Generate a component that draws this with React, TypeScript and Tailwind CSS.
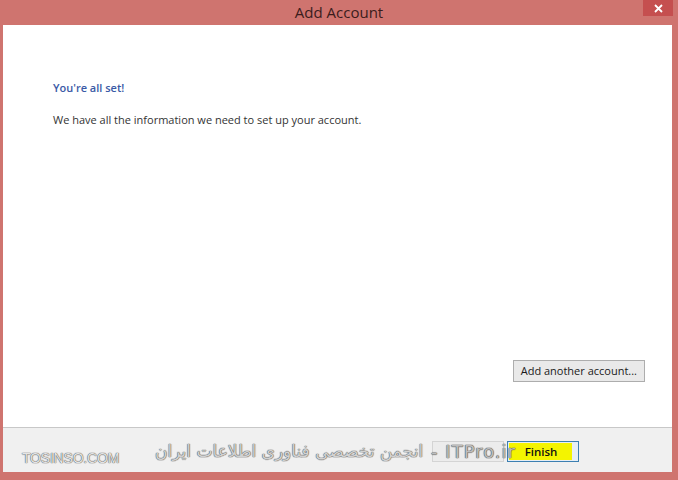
import React from "react";

export default function App() {
  return (
    <div className="w-[678px] h-[480px] bg-[#cf746f] flex flex-col overflow-hidden font-['Open_Sans','Noto_Sans',sans-serif]">
      {/* Title bar */}
      <div className="relative h-[25px] flex items-center justify-center shrink-0">
        <span className="text-[15px] text-[#3b1c1c] leading-none">Add Account</span>
        <div className="absolute right-[5px] top-0 w-[30px] h-[16px] bg-[#c54f4f] flex items-center justify-center">
          <svg width="9" height="9" viewBox="0 0 9 9">
            <path d="M1 1 L8 8 M8 1 L1 8" stroke="#fff" strokeWidth="1.8" />
          </svg>
        </div>
      </div>

      {/* Window body */}
      <div className="flex-1 ml-[3px] mr-[6px] mb-[8px] flex flex-col bg-white">
        <div className="flex-1 flex flex-col pl-[50px] pr-[27px] pt-[55px] border-b border-[#c8c8c8]">
          <div className="text-[11px] font-semibold text-[#3a5aa6] leading-[16px]">You're all set!</div>
          <div className="text-[11px] text-[#333] leading-[16px] mt-[16px]">We have all the information we need to set up your account.</div>
          <div className="flex-1" />
          <div className="flex justify-end mb-[45px]">
            <div className="h-[22px] px-[7px] border border-[#adadad] bg-[#e9e9e9] flex items-center text-[11px] text-[#1a1a1a]">
              Add another account...
            </div>
          </div>
        </div>
        <div className="relative h-[44px] bg-[#f0f0f0] shrink-0 flex items-start pt-[13px] pl-[429px]">
          <div className="w-[72px] h-[21px] border border-[#d4d4d4] bg-[#ececec]" />
          <div className="ml-[3px] w-[72px] h-[21px] border border-[#3c7fb1] bg-[#e6eef6] relative flex items-center justify-center">
            <div className="absolute left-[1px] top-[1px] bottom-[1px] right-[6px] bg-[#f4f400]" />
            <span className="relative text-[11.5px] font-semibold text-[#111] mr-[4px]">Finish</span>
          </div>

          {/* Watermark */}
          <div className="absolute left-[19px] top-[20px] flex items-baseline">
            <span className="text-[14px] text-[#e4e4e4] tracking-[-0.2px] font-['Liberation_Sans',Arial,sans-serif] [text-shadow:0_0_1px_#4a4a4a,0_0_1px_#4a4a4a]">
              TOSINSO.COM
            </span>
          </div>
          <div className="absolute left-[152px] top-[10px] flex items-center">
            <span
              dir="rtl"
              className="text-[17px] text-[#d2d2d2] font-['DejaVu_Sans',sans-serif] [text-shadow:0_0_1px_#666,0_0_1px_#666,0_0_1px_#666]"
            >
              انجمن تخصصی فناوری اطلاعات ایران
            </span>
            <span
              dir="ltr"
              className="ml-[8px] text-[18px] text-[#bdbdbd] tracking-[1px] font-['DejaVu_Sans',sans-serif] [text-shadow:0_0_1px_#5a5a5a,0_0_1px_#5a5a5a,0_0_1px_#5a5a5a]"
            >
              - ITPro.ir
            </span>
          </div>
        </div>
      </div>
    </div>
  );
}
